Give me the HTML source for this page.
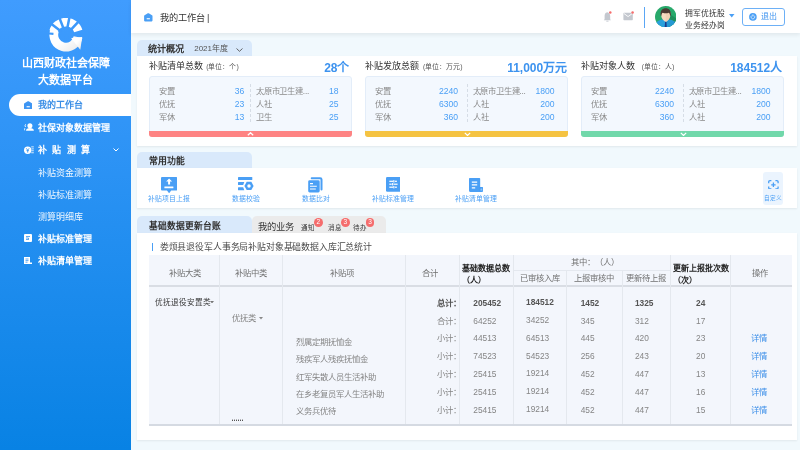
<!DOCTYPE html>
<html lang="zh-CN"><head><meta charset="utf-8">
<style>
*{margin:0;padding:0;box-sizing:border-box}
html,body{width:800px;height:450px;overflow:hidden}
body{will-change:transform}
body{text-spacing-trim:space-all;position:relative;background:#f1f9fd;font-family:"Liberation Sans",sans-serif;color:#333}
.a{position:absolute;white-space:nowrap}
#side{position:absolute;left:0;top:0;width:131px;height:450px;background:linear-gradient(180deg,#409cfe 0%,#0882e4 100%)}
.st{position:absolute;left:0;width:131px;text-align:center;color:#fff;font-weight:bold;font-size:11px;line-height:16px}
.nav{position:absolute;left:38px;color:#fff;font-weight:bold;font-size:9px;line-height:12px}
.sub{position:absolute;left:38px;color:rgba(255,255,255,.93);font-size:9px;line-height:12px}
#active{position:absolute;left:9px;top:94px;width:122px;height:22px;background:#fff;border-radius:11px 0 0 11px}
#hdr{position:absolute;left:131px;top:0;width:669px;height:33px;background:#fff;box-shadow:0 1.5px 4px rgba(0,0,0,.07)}
.tab{position:absolute;height:16.5px;background:#d9e9fb;border-radius:5px 5px 0 0}
.card{position:absolute;background:#fff;box-shadow:0 1px 2px rgba(0,0,0,.07)}
.box{position:absolute;background:#f3f8fe;border:1px solid #e3edf9;border-radius:3px}
.chev{position:absolute;top:54.9px}
.lbl{position:absolute;font-size:8.3px;color:#8a8a8a;line-height:10px}
.num{position:absolute;font-size:8.6px;color:#4a9ff5;line-height:10px;text-align:right}
.bar{position:absolute;left:-1px;right:-1px;bottom:-1px;height:6px;border-radius:0 0 3px 3px}
.ttl{position:absolute;font-size:9px;color:#333;line-height:11px}
.unit{font-size:6.9px;color:#555;margin-left:1px}
.big{position:absolute;font-size:12px;font-weight:bold;color:#3d93ef;line-height:14px;text-align:right}
.ic{position:absolute;font-size:6.85px;color:#4a9ff5;line-height:8px;text-align:center}
.th{position:absolute;font-size:8.33px;color:#707070;line-height:9px;text-align:center}
.thb{position:absolute;font-size:8px;color:#222;font-weight:bold;line-height:11.5px;text-align:center}
.td{position:absolute;font-size:8.33px;color:#858585;line-height:9px}
.tdb{position:absolute;font-size:8.33px;color:#555;font-weight:bold;line-height:9px}
.badge{width:8.8px;height:8.8px;border-radius:50%;background:#f56c6c;color:#fff;font-size:6.5px;line-height:8.8px;text-align:center}
.vl{position:absolute;width:1px;background:#e4e8ee}
</style></head><body>

<!-- SIDEBAR -->
<div id="side">
  <svg class="a" style="left:48.5px;top:17.5px" width="34" height="34" viewBox="0 0 34 34">
    <defs><linearGradient id="lg" x1="0" y1="0" x2="1" y2="1"><stop offset="0.45" stop-color="#fff"/><stop offset="1" stop-color="#e6e6e6"/></linearGradient></defs>
    <path fill="#fff" d="M0.47 12.26A17.20 17.20 0 0 1 33.36 11.68L25.18 14.34A8.60 8.60 0 0 0 8.73 14.63Z"/>
    <path fill="url(#lg)" d="M33.35 19.88A16.60 16.60 0 1 1 1.40 11.32L9.67 14.33A7.80 7.80 0 1 0 24.68 18.35Z"/>
    <path fill="url(#lg)" d="M22.2 19.9L33.2 18.9L31.3 31.7L23.5 22Z"/>
    <path fill="#3d99fb" d="M12.96 12.39L2.58 4.57L1.07 6.56L11.46 14.39ZM16.02 10.95L11.36 -1.19L9.02 -0.29L13.68 11.85ZM19.37 11.35L21.85 -1.41L19.40 -1.89L16.92 10.87ZM22.01 13.46L30.87 3.96L29.04 2.25L20.18 11.76ZM4.54 14.81L-1.83 14.25L-2.02 16.44L4.35 17.00Z"/>
  </svg>
  <div class="st" style="top:55px">山西财政社会保障</div>
  <div class="st" style="top:72px">大数据平台</div>
  <div id="active"></div>
  <svg class="a" style="left:24px;top:100.5px" width="8.4" height="8.4" viewBox="0 0 8.4 8.4"><path fill="#3d95f3" d="M3.7 0.3Q4.2 0 4.7 0.3L7.9 2.2Q8.4 2.5 8.4 3V7.6Q8.4 8.4 7.6 8.4H0.8Q0 8.4 0 7.6V3Q0 2.5 0.5 2.2Z"/><rect x="2.6" y="5.2" width="3.2" height="1.1" fill="#fff"/></svg>
  <div class="nav" style="top:99px;color:#3a8ee6">我的工作台</div>
  <svg class="a" style="left:23.5px;top:123.3px" width="10" height="8" viewBox="0 0 10 8"><circle cx="5.9" cy="2.8" r="2.5" fill="#fff"/><path fill="#fff" d="M2 7.8C2 5.8 3.6 4.9 5.9 4.9S9.9 5.8 9.9 7.8Z"/><path d="M1.6 1.3Q0.6 2.6 1.5 4M0.9 5.2Q0.3 6.2 0.6 7.3" stroke="#fff" stroke-width=".9" fill="none"/></svg>
  <div class="nav" style="top:121.5px">社保对象数据管理</div>
  <svg class="a" style="left:23.5px;top:145.5px" width="10" height="8.5" viewBox="0 0 10 8.5"><circle cx="3.7" cy="4.2" r="3.7" fill="#fff"/><path d="M2.3 2.3L3.7 4.2L5.1 2.3M3.7 4.2V6.6M2.5 4.6H4.9" stroke="#2a8ef0" stroke-width=".8" fill="none"/><g fill="#fff"><rect x="7.2" y="0.5" width="2.6" height=".8"/><rect x="7.6" y="2.5" width="2.2" height=".8"/><rect x="7.6" y="4.4" width="2.2" height=".8"/><rect x="7.2" y="6.4" width="2.6" height=".8"/></g></svg>
  <div class="nav" style="top:144px;letter-spacing:5.3px">补贴测算</div>
  <svg class="a" style="left:112.5px;top:148px" width="6" height="4" viewBox="0 0 6 4"><path d="M0.5 0.5L3 3L5.5 0.5" stroke="#fff" stroke-width="1" fill="none"/></svg>
  <div class="sub" style="top:166.5px">补贴资金测算</div>
  <div class="sub" style="top:188.5px">补贴标准测算</div>
  <div class="sub" style="top:211px">测算明细库</div>
  <svg class="a" style="left:24.2px;top:234.2px" width="8" height="8" viewBox="0 0 8 8"><rect width="8" height="8" rx="1" fill="#fff"/><path d="M2 2.5H6M2 4H4.5M4.5 4V6M2 5.5H4" stroke="#3a95f0" stroke-width=".8" fill="none"/></svg>
  <div class="nav" style="top:233px">补贴标准管理</div>
  <svg class="a" style="left:24.2px;top:256.8px" width="8" height="7.5" viewBox="0 0 8 7.5"><path d="M0 0H6V5.5H8V7.5H0Z" fill="#fff"/><path d="M1.5 2H4.5M1.5 3.6H4.5M1.5 5.2H3.5" stroke="#3a95f0" stroke-width=".8" fill="none"/></svg>
  <div class="nav" style="top:255px">补贴清单管理</div>
</div>

<!-- HEADER -->
<div id="hdr"></div>
<svg class="a" style="left:144.4px;top:13.4px" width="8.6" height="8.4" viewBox="0 0 8.4 8.4"><path fill="#4a9ff5" d="M3.7 0.3Q4.2 0 4.7 0.3L7.9 2.2Q8.4 2.5 8.4 3V7.6Q8.4 8.4 7.6 8.4H0.8Q0 8.4 0 7.6V3Q0 2.5 0.5 2.2Z"/><rect x="2.6" y="5.2" width="3.2" height="1.1" fill="#fff"/></svg>
<div class="a" style="left:159.5px;top:12px;font-size:9.2px;line-height:12px;color:#333">我的工作台 |</div>

<!-- bell / mail -->
<svg class="a" style="left:603px;top:11px" width="10" height="11" viewBox="0 0 10 11"><path fill="#c4c8cf" d="M4.2 1.2C2.3 1.6 1.6 3.2 1.6 5V8.3L0.8 9.2H7.9L7.2 8.3V5C7.2 3.2 6.3 1.6 4.2 1.2Z"/><rect x="3.3" y="9.7" width="2.2" height="0.9" fill="#c4c8cf"/><circle cx="7.3" cy="1.6" r="1.25" fill="#f56c6c"/></svg>
<svg class="a" style="left:623.3px;top:11px" width="11" height="10" viewBox="0 0 11 10"><rect x="0.4" y="1.8" width="9.4" height="7.4" rx="0.6" fill="#c4c8cf"/><path d="M0.8 2.4L5.1 5.6L9.4 2.4" stroke="#fff" stroke-width="0.9" fill="none"/><circle cx="9.6" cy="1.6" r="1.25" fill="#f56c6c"/></svg>
<div class="a" style="left:644px;top:7px;width:1px;height:20.5px;background:#5aa6f5"></div>
<!-- avatar -->
<svg class="a" style="left:654.8px;top:5.8px" width="21.5" height="21.5" viewBox="0 0 22 22">
  <defs><clipPath id="cc"><circle cx="11" cy="11" r="11"/></clipPath></defs>
  <g clip-path="url(#cc)">
    <rect width="22" height="22" fill="#28a96b"/>
    <path d="M12 6L22 13V22H12Z" fill="#1f8f5a"/>
    <path d="M0 22C0 16.5 3 13.5 11 13.5S22 16.5 22 22Z" fill="#2aa0dc"/>
    <path d="M11 13.5L22 16V22H11Z" fill="#2492cc" opacity=".6"/>
    <path d="M6.3 6.5V9C6.3 12.5 8.5 15 11 16.6C13.5 15 15.7 12.5 15.7 9V6.5Z" fill="#f6dcc0"/>
    <path d="M11 6.5H15.7V9C15.7 12.5 13.5 15 11 16.6Z" fill="#ecccab" opacity=".6"/>
    <path d="M5.8 10C5.2 5 7.5 2.4 11 2.4S16.8 5 16.2 10L15.5 10C15.3 8 14.8 7 14 6.8C12.5 7.6 9.5 7.6 8 6.8C7.2 7 6.7 8 6.5 10Z" fill="#4b3b33"/>
    <path d="M10.3 16.2H11.7L12.1 22H9.9Z" fill="#1b3b8e"/>
  </g>
</svg>
<div class="a" style="left:685px;top:8.5px;font-size:7.8px;font-weight:500;line-height:10px;color:#333">拥军优抚股</div>
<div class="a" style="left:685px;top:20.6px;font-size:7.8px;font-weight:500;line-height:10px;color:#333">业务经办岗</div>
<svg class="a" style="left:729.3px;top:14.2px" width="5.5" height="3.5" viewBox="0 0 5.5 3.5"><path d="M0 0H5.5L2.75 3.5Z" fill="#4a9ff5"/></svg>
<div class="a" style="left:742px;top:7.5px;width:43px;height:18.3px;border:1px solid #6db0f6;border-radius:3px;background:#fff"></div>
<svg class="a" style="left:749.2px;top:13.2px" width="7.8" height="7.8" viewBox="0 0 8 8"><circle cx="4" cy="4" r="3.9" fill="#4a9ff5"/><path d="M2.9 2.6A1.9 1.9 0 1 0 5.1 2.6" stroke="#fff" stroke-width=".7" fill="none"/><path d="M4 1.4V3.6" stroke="#fff" stroke-width=".8"/></svg>
<div class="a" style="left:760.5px;top:12.2px;font-size:8px;line-height:10px;color:#3d93ef">退出</div>

<!-- STATS -->
<div class="tab" style="left:137px;top:39.5px;width:114.5px"></div>
<div class="a" style="left:148.3px;top:42.8px;font-size:9.1px;line-height:12px;font-weight:bold;color:#333">统计概况</div>
<div class="a" style="left:194.2px;top:43.2px;font-size:8px;line-height:12px;color:#555">2021年度</div>
<svg class="a" style="left:236.3px;top:47.5px" width="7" height="4" viewBox="0 0 7 4"><path d="M0.5 0.5L3.5 3.3L6.5 0.5" stroke="#555" stroke-width=".9" fill="none"/></svg>
<div class="card" style="left:137px;top:56px;width:659.5px;height:89.5px"></div>

<div class="ttl a" style="left:148.7px;top:61px">补贴清单总数 <span class="unit">(单位：个)</span></div>
<div class="big" style="left:250px;top:60.5px;width:99.5px">28个</div>
<div class="box" style="left:149px;top:76.2px;width:203px;height:60.8px">
  <div class="bar" style="background:#fe8383"></div>
  <svg class="chev" style="left:97.4px" width="7" height="4.4" viewBox="0 0 7 4.4"><path d="M0.8 3.3L3.5 0.7L6.2 3.3" stroke="#fff" stroke-width="1.2" fill="none"/></svg>
</div>

<div class="ttl a" style="left:365.4px;top:61px">补贴发放总额 <span class="unit">(单位：万元)</span></div>
<div class="big" style="left:460px;top:60.5px;width:107.2px">11,000万元</div>
<div class="box" style="left:365.4px;top:76.2px;width:202.6px;height:60.8px">
  <div class="bar" style="background:#f5c342"></div>
  <svg class="chev" style="left:97.4px" width="7" height="4.4" viewBox="0 0 7 4.4"><path d="M0.8 0.9L3.5 3.5L6.2 0.9" stroke="#fff" stroke-width="1.2" fill="none"/></svg>
</div>

<div class="ttl a" style="left:581.2px;top:61px">补贴对象人数 <span class="unit" style="margin-left:4px">(单位：人)</span></div>
<div class="big" style="left:680px;top:60.5px;width:102.2px">184512人</div>
<div class="box" style="left:581.2px;top:76.2px;width:202.5px;height:60.8px">
  <div class="bar" style="background:#71d8aa"></div>
  <svg class="chev" style="left:97.4px" width="7" height="4.4" viewBox="0 0 7 4.4"><path d="M0.8 0.9L3.5 3.5L6.2 0.9" stroke="#fff" stroke-width="1.2" fill="none"/></svg>
</div>

<div class="lbl" style="left:158.9px;top:85.6px">安置</div>
<div class="num" style="left:194.3px;top:85.6px;width:50px">36</div>
<div class="lbl" style="left:256px;top:85.6px;letter-spacing:-0.2px">太原市卫生建...</div>
<div class="num" style="left:288.5px;top:85.6px;width:50px">18</div>
<div class="lbl" style="left:158.9px;top:99.1px">优抚</div>
<div class="num" style="left:194.3px;top:99.1px;width:50px">23</div>
<div class="lbl" style="left:256px;top:99.1px">人社</div>
<div class="num" style="left:288.5px;top:99.1px;width:50px">25</div>
<div class="lbl" style="left:158.9px;top:112.4px">军休</div>
<div class="num" style="left:194.3px;top:112.4px;width:50px">13</div>
<div class="lbl" style="left:256px;top:112.4px">卫生</div>
<div class="num" style="left:288.5px;top:112.4px;width:50px">25</div>
<div class="a" style="left:250px;top:84.3px;height:37.7px;border-left:1px dashed #d6dde6"></div>
<div class="lbl" style="left:375px;top:85.6px">安置</div>
<div class="num" style="left:408px;top:85.6px;width:50px">2240</div>
<div class="lbl" style="left:472.5px;top:85.6px;letter-spacing:-0.2px">太原市卫生建...</div>
<div class="num" style="left:504.5px;top:85.6px;width:50px">1800</div>
<div class="lbl" style="left:375px;top:99.1px">优抚</div>
<div class="num" style="left:408px;top:99.1px;width:50px">6300</div>
<div class="lbl" style="left:472.5px;top:99.1px">人社</div>
<div class="num" style="left:504.5px;top:99.1px;width:50px">200</div>
<div class="lbl" style="left:375px;top:112.4px">军休</div>
<div class="num" style="left:408px;top:112.4px;width:50px">360</div>
<div class="lbl" style="left:472.5px;top:112.4px">人社</div>
<div class="num" style="left:504.5px;top:112.4px;width:50px">200</div>
<div class="a" style="left:466.5px;top:84.3px;height:37.7px;border-left:1px dashed #d6dde6"></div>
<div class="lbl" style="left:591px;top:85.6px">安置</div>
<div class="num" style="left:624px;top:85.6px;width:50px">2240</div>
<div class="lbl" style="left:688.5px;top:85.6px;letter-spacing:-0.2px">太原市卫生建...</div>
<div class="num" style="left:720.5px;top:85.6px;width:50px">1800</div>
<div class="lbl" style="left:591px;top:99.1px">优抚</div>
<div class="num" style="left:624px;top:99.1px;width:50px">6300</div>
<div class="lbl" style="left:688.5px;top:99.1px">人社</div>
<div class="num" style="left:720.5px;top:99.1px;width:50px">200</div>
<div class="lbl" style="left:591px;top:112.4px">军休</div>
<div class="num" style="left:624px;top:112.4px;width:50px">360</div>
<div class="lbl" style="left:688.5px;top:112.4px">人社</div>
<div class="num" style="left:720.5px;top:112.4px;width:50px">200</div>
<div class="a" style="left:682.5px;top:84.3px;height:37.7px;border-left:1px dashed #d6dde6"></div>

<!-- COMMON -->
<div class="tab" style="left:137px;top:151.7px;width:114.5px"></div>
<div class="a" style="left:148.7px;top:155px;font-size:8.9px;line-height:12px;font-weight:bold;color:#333">常用功能</div>
<div class="card" style="left:137px;top:168px;width:659.5px;height:40px"></div>


<!-- icons -->
<svg class="a" style="left:160.9px;top:176.6px" width="16.2" height="16.4" viewBox="0 0 16.2 16.4"><path fill="#4a9ff5" d="M1 0H15.2A1 1 0 0 1 16.2 1V12.6A1 1 0 0 1 15.2 13.6H10.2L8.1 16.3L6 13.6H1A1 1 0 0 1 0 12.6V1A1 1 0 0 1 1 0Z"/><path fill="#fff" d="M8.1 1.5L11.1 4.4H9.1V7.5H7.1V4.4H5.1Z"/><rect x="3.4" y="9.4" width="9" height="1.8" rx=".3" fill="#fff"/></svg>
<div class="ic" style="left:143px;top:194.6px;width:52px">补贴项目上报</div>
<svg class="a" style="left:237.6px;top:176.9px" width="16" height="14" viewBox="0 0 16 14"><g fill="#4a9ff5"><rect x="0" y="0" width="14.3" height="3" rx=".6"/><path d="M0.5 5.1H6.3L5.2 7.9H0.5A.5 .5 0 0 1 0 7.4V5.6A.5 .5 0 0 1 .5 5.1Z"/><path d="M0.5 10.2H5.2L6.3 13.2H0.5A.5 .5 0 0 1 0 12.7V10.7A.5 .5 0 0 1 .5 10.2Z"/><path d="M6.4 8.9L8.7 4.8H13.3L15.6 8.9L13.3 13.1H8.7Z"/></g><circle cx="11" cy="8.9" r="1.75" fill="#fff"/></svg>
<div class="ic" style="left:220px;top:194.6px;width:51px">数据校验</div>
<svg class="a" style="left:308.2px;top:177px" width="15" height="16" viewBox="0 0 15 16"><path d="M3.7 1.2H12.2A1.3 1.3 0 0 1 13.5 2.5V12.5" stroke="#4a9ff5" stroke-width="2" fill="none" stroke-linecap="round"/><rect x="0.2" y="3.3" width="11.5" height="12.2" rx="1.4" fill="#4a9ff5"/><path d="M2 6.6H5M2 9.2H8.8M2 12H7.8" stroke="#fff" stroke-width="1.1"/></svg>
<div class="ic" style="left:290px;top:194.6px;width:51px">数据比对</div>
<svg class="a" style="left:385.6px;top:176.9px" width="14.8" height="14.8" viewBox="0 0 14.8 14.8"><rect width="14.8" height="14.8" rx="1.3" fill="#4a9ff5"/><g fill="#fff"><rect x="3.3" y="3.7" width="4" height="1.2"/><rect x="7.3" y="3.1" width="1.1" height="2.4"/><rect x="8.9" y="3.7" width="2" height="1.2"/><rect x="3.3" y="6.6" width="2.4" height="1.2"/><rect x="6.1" y="6" width="1.1" height="2.4"/><rect x="7.6" y="6.6" width="4" height="1.2"/><rect x="3.3" y="9.6" width="4" height="1.2"/><rect x="7.3" y="9" width="1.1" height="2.4"/><rect x="8.9" y="9.6" width="2" height="1.2"/></g></svg>
<div class="ic" style="left:366px;top:194.6px;width:53px">补贴标准管理</div>
<svg class="a" style="left:468.9px;top:177.9px" width="14.4" height="14" viewBox="0 0 14.4 14"><path fill="#4a9ff5" d="M0.8 0H10.4A0.8 0.8 0 0 1 11.2 0.8V8.9H13.2A1 1 0 0 1 14.2 9.9V12.8A1.2 1.2 0 0 1 13 14H1.6A1.6 1.6 0 0 1 0 12.4V0.8A0.8 0.8 0 0 1 0.8 0Z"/><path d="M2.8 4.1H8.2M2.8 6.9H8.2M2.8 9.8H6.2" stroke="#fff" stroke-width="1.3"/><rect x="11.4" y="10.6" width="1.9" height="2" rx=".4" fill="#8cc3f9"/><path d="M11 9V13.4" stroke="#2f8ae6" stroke-width=".5" opacity=".5"/></svg>
<div class="ic" style="left:449px;top:194.6px;width:53px">补贴清单管理</div>
<div class="a" style="left:763.2px;top:171.9px;width:20.3px;height:32.8px;background:#ebf4fe;border-radius:3px"></div>
<svg class="a" style="left:767.8px;top:179.8px" width="10.8" height="9.6" viewBox="0 0 10.8 9.6"><path d="M0.7 3.2V1.9A1.2 1.2 0 0 1 1.9 0.7H3.4M7.4 0.7H8.9A1.2 1.2 0 0 1 10.1 1.9V3.2M10.1 6.4V7.7A1.2 1.2 0 0 1 8.9 8.9H7.4M3.4 8.9H1.9A1.2 1.2 0 0 1 0.7 7.7V6.4" stroke="#4a9ff5" stroke-width="1.3" fill="none"/><path d="M5.4 2.6V7M3.2 4.8H7.6" stroke="#4a9ff5" stroke-width="1.3"/></svg>
<div class="ic" style="left:760.3px;top:193.6px;width:26px;font-size:5.65px">自定义</div>

<!-- BOTTOM -->
<div class="tab" style="left:137px;top:216.4px;width:114.5px"></div>
<div class="tab" style="left:251.5px;top:216.4px;width:134.5px;background:#ebebeb"></div>
<div class="a" style="left:148.7px;top:220.3px;font-size:8.75px;line-height:12px;font-weight:bold;color:#333">基础数据更新台账</div>
<div class="a" style="left:258px;top:220.5px;font-size:9.3px;line-height:12px;color:#333">我的业务</div>
<div class="card" style="left:137px;top:232.6px;width:659.5px;height:207px"></div>
<div class="a" style="left:300.8px;top:223.5px;font-size:6.5px;line-height:8px;color:#333">通知</div>
<div class="a" style="left:328.4px;top:223.5px;font-size:6.5px;line-height:8px;color:#333">消息</div>
<div class="a" style="left:352.8px;top:223.5px;font-size:6.5px;line-height:8px;color:#333">待办</div>
<div class="a badge" style="left:314px;top:218.3px">2</div>
<div class="a badge" style="left:340.8px;top:218.3px">3</div>
<div class="a badge" style="left:365.6px;top:218.3px">3</div>



<!-- table -->
<div class="a" style="left:151.8px;top:243px;width:1.5px;height:7.6px;background:#4a9ff5"></div>
<div class="a" style="left:159.8px;top:241px;font-size:8.9px;letter-spacing:-0.16px;line-height:12px;color:#4a4a4a">娄烦县退役军人事务局补贴对象基础数据入库汇总统计</div>
<div class="a" style="left:149px;top:255px;width:643px;height:170px;background:#f3f6fc"></div>
<div class="a" style="left:149px;top:285px;width:643px;height:2px;background:#d9dde4"></div>
<div class="a" style="left:149px;top:424px;width:643px;height:2px;background:#d5dae2"></div>
<div class="a" style="left:513px;top:270px;width:157px;height:1px;background:#e4e8ef"></div>
<div class="vl" style="left:219px;top:255px;height:169px"></div>
<div class="vl" style="left:282px;top:255px;height:169px"></div>
<div class="vl" style="left:405px;top:255px;height:169px"></div>
<div class="vl" style="left:459px;top:255px;height:169px"></div>
<div class="vl" style="left:513px;top:255px;height:169px"></div>
<div class="vl" style="left:566px;top:270px;height:154px"></div>
<div class="vl" style="left:622px;top:270px;height:154px"></div>
<div class="vl" style="left:670px;top:255px;height:169px"></div>
<div class="vl" style="left:730px;top:255px;height:169px"></div>
<div class="th" style="left:150px;width:69px;top:268.5px;">补贴大类</div>
<div class="th" style="left:219px;width:63px;top:268.5px;">补贴中类</div>
<div class="th" style="left:282px;width:123px;top:268.5px;padding-right:3px">补贴项</div>
<div class="th" style="left:405px;width:54px;top:268.5px;padding-right:4px">合计</div>
<div class="thb" style="left:462.3px;top:263px;width:52px;white-space:normal;text-align:left">基础数据总数（人）</div>
<div class="th" style="left:516.5px;width:157.0px;top:258.0px;">其中：（人）</div>
<div class="th" style="left:513px;width:53px;top:273.8px;">已审核入库</div>
<div class="th" style="left:566px;width:56px;top:273.8px;">上报审核中</div>
<div class="th" style="left:622px;width:48px;top:273.8px;">更新待上报</div>
<div class="thb" style="left:673.2px;top:263px;width:60px;white-space:normal;text-align:left">更新上报批次数（次）</div>
<div class="th" style="left:730px;width:62px;top:268.5px;padding-right:3px">操作</div>
<div class="tdb" style="left:436.5px;top:298.8px">总计：</div>
<div class="tdb" style="left:473.3px;top:298.8px">205452</div>
<div class="tdb" style="left:526px;top:298.2px">184512</div>
<div class="tdb" style="left:580.7px;top:298.8px">1452</div>
<div class="tdb" style="left:634.9px;top:298.8px">1325</div>
<div class="tdb" style="left:696px;top:298.8px">24</div>
<div class="td" style="left:436.5px;top:316.6px">合计：</div>
<div class="td" style="left:473.3px;top:316.6px">64252</div>
<div class="td" style="left:526px;top:316.0px">34252</div>
<div class="td" style="left:580.7px;top:316.6px">345</div>
<div class="td" style="left:634.9px;top:316.6px">312</div>
<div class="td" style="left:696px;top:316.6px">17</div>
<div class="td" style="left:436.5px;top:334.4px">小计：</div>
<div class="td" style="left:473.3px;top:334.4px">44513</div>
<div class="td" style="left:526px;top:333.79999999999995px">64513</div>
<div class="td" style="left:580.7px;top:334.4px">445</div>
<div class="td" style="left:634.9px;top:334.4px">420</div>
<div class="td" style="left:696px;top:334.4px">23</div>
<div class="td" style="left:750.8px;top:334.4px;color:#3d8fe8">详情</div>
<div class="td" style="left:436.5px;top:352.2px">小计：</div>
<div class="td" style="left:473.3px;top:352.2px">74523</div>
<div class="td" style="left:526px;top:351.59999999999997px">54523</div>
<div class="td" style="left:580.7px;top:352.2px">256</div>
<div class="td" style="left:634.9px;top:352.2px">243</div>
<div class="td" style="left:696px;top:352.2px">20</div>
<div class="td" style="left:750.8px;top:352.2px;color:#3d8fe8">详情</div>
<div class="td" style="left:436.5px;top:370.0px">小计：</div>
<div class="td" style="left:473.3px;top:370.0px">25415</div>
<div class="td" style="left:526px;top:369.4px">19214</div>
<div class="td" style="left:580.7px;top:370.0px">452</div>
<div class="td" style="left:634.9px;top:370.0px">447</div>
<div class="td" style="left:696px;top:370.0px">13</div>
<div class="td" style="left:750.8px;top:370.0px;color:#3d8fe8">详情</div>
<div class="td" style="left:436.5px;top:387.8px">小计：</div>
<div class="td" style="left:473.3px;top:387.8px">25415</div>
<div class="td" style="left:526px;top:387.2px">19214</div>
<div class="td" style="left:580.7px;top:387.8px">452</div>
<div class="td" style="left:634.9px;top:387.8px">447</div>
<div class="td" style="left:696px;top:387.8px">16</div>
<div class="td" style="left:750.8px;top:387.8px;color:#3d8fe8">详情</div>
<div class="td" style="left:436.5px;top:405.6px">小计：</div>
<div class="td" style="left:473.3px;top:405.6px">25415</div>
<div class="td" style="left:526px;top:405.0px">19214</div>
<div class="td" style="left:580.7px;top:405.6px">452</div>
<div class="td" style="left:634.9px;top:405.6px">447</div>
<div class="td" style="left:696px;top:405.6px">15</div>
<div class="td" style="left:750.8px;top:405.6px;color:#3d8fe8">详情</div>
<div class="td" style="left:295.6px;top:337.7px">烈属定期抚恤金</div>
<div class="td" style="left:295.6px;top:355.1px">残疾军人残疾抚恤金</div>
<div class="td" style="left:295.6px;top:372.8px">红军失散人员生活补助</div>
<div class="td" style="left:295.6px;top:390.1px">在乡老复员军人生活补助</div>
<div class="td" style="left:295.6px;top:406.5px">义务兵优待</div>
<div class="td" style="left:155px;top:297.5px;color:#3a3a3a;font-weight:500;font-size:7.65px">优抚退役安置类</div>
<svg class="a" style="left:210.3px;top:300.6px" width="4" height="2.5" viewBox="0 0 4 2.5"><path d="M0 0H4L2 2.5Z" fill="#777"/></svg>
<div class="td" style="left:231.6px;top:314.2px">优抚类</div>
<svg class="a" style="left:259px;top:317.3px" width="4" height="2.5" viewBox="0 0 4 2.5"><path d="M0 0H4L2 2.5Z" fill="#888"/></svg>
<svg class="a" style="left:231px;top:419px" width="13" height="3" viewBox="0 0 13 3"><g fill="#555"><rect x="1" y="0.6" width="1" height="1.4"/><rect x="3" y="0.6" width="1" height="1.4"/><rect x="5" y="0.6" width="1" height="1.4"/><rect x="7" y="0.6" width="1" height="1.4"/><rect x="9" y="0.6" width="1" height="1.4"/><rect x="11" y="0.6" width="1" height="1.4"/></g></svg>

</body></html>
